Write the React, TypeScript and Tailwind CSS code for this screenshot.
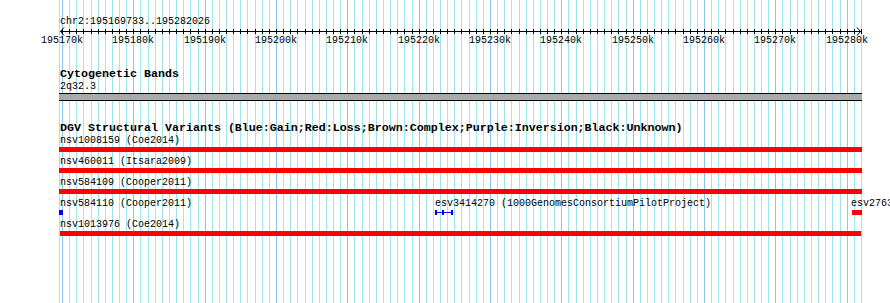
import React from "react";

const colOf = (k: number) => Math.round(62 + (k - 195170) * 7.1336);

const ticks: number[] = Array.from({ length: 113 }, (_, i) => 195170 + i);

type Feature = {
  label: string;
  labelLeft: number;
  left: number;
  width: number;
  kind: "red" | "blue" | "segments";
};

const rows: Feature[][] = [
  [{ label: "nsv1008159 (Coe2014)", labelLeft: 60, left: 59, width: 803, kind: "red" }],
  [{ label: "nsv460011 (Itsara2009)", labelLeft: 60, left: 59, width: 803, kind: "red" }],
  [{ label: "nsv584109 (Cooper2011)", labelLeft: 60, left: 59, width: 803, kind: "red" }],
  [
    { label: "nsv584110 (Cooper2011)", labelLeft: 60, left: 59, width: 4, kind: "blue" },
    {
      label: "esv3414270 (1000GenomesConsortiumPilotProject)",
      labelLeft: 435,
      left: 435,
      width: 18,
      kind: "segments",
    },
    { label: "esv2763", labelLeft: 851, left: 852, width: 10, kind: "red" },
  ],
  [{ label: "nsv1013976 (Coe2014)", labelLeft: 60, left: 60, width: 801, kind: "red" }],
];

function Glyph({ f }: { f: Feature }) {
  if (f.kind === "segments") {
    return (
      <svg
        className="absolute top-[12px]"
        style={{ left: f.left }}
        width={f.width}
        height={5}
        shapeRendering="crispEdges"
      >
        <rect x={0} y={0} width={2} height={5} fill="#0000ff" />
        <rect x={7} y={0} width={2} height={5} fill="#0000ff" />
        <rect x={16} y={0} width={2} height={5} fill="#0000ff" />
        <rect x={0} y={2} width={18} height={1} fill="#0000ff" />
      </svg>
    );
  }
  return (
    <div
      className={
        "absolute top-[12px] h-[5px] " + (f.kind === "red" ? "bg-[#ff0000]" : "bg-[#0000ff]")
      }
      style={{ left: f.left, width: f.width }}
    />
  );
}

export default function App() {
  return (
    <div className="relative w-[890px] h-[303px] overflow-hidden bg-white text-black [font-family:'Liberation_Mono',monospace]">
      <svg
        className="absolute inset-0"
        width={890}
        height={303}
        shapeRendering="crispEdges"
      >
        <rect x={59} y={0} width={1} height={303} fill="#a0e6ee" />
        {ticks.map((k) => (
          <rect
            key={k}
            x={colOf(k)}
            y={0}
            width={1}
            height={303}
            fill={k % 10 === 0 ? "#88c6ec" : "#a0e6ee"}
          />
        ))}
      </svg>

      <div className="relative flex flex-col pt-[16px]">
        <div className="pl-[60px] h-[12px] leading-[12px] text-[10px] whitespace-pre">
          chr2:195169733..195282026
        </div>

        {/* ruler */}
        <div className="relative h-[21px] mt-[-1px]">
          <svg className="absolute left-0 top-0" width={890} height={9}>
            <rect x={60} y={4} width={801} height={1} fill="#000" shapeRendering="crispEdges" />
            {ticks.map((k) => (
              <rect
                key={k}
                x={colOf(k)}
                y={2}
                width={1}
                height={5}
                fill="#000"
                shapeRendering="crispEdges"
              />
            ))}
            <polyline points="64,0.5 60.5,4.5 64,8.5" fill="none" stroke="#000" strokeWidth={1} />
            <polyline points="857,0.5 860.5,4.5 857,8.5" fill="none" stroke="#000" strokeWidth={1} />
          </svg>
          {ticks
            .filter((k) => k % 10 === 0)
            .map((k) => (
              <span
                key={k}
                className="absolute top-[8px] h-[12px] leading-[12px] text-[10px] whitespace-pre"
                style={{ left: colOf(k) - 21 }}
              >
                {k}k
              </span>
            ))}
        </div>

        {/* Cytogenetic Bands */}
        <div className="mt-[20px] pl-[60px] h-[13px] leading-[13px] text-[11.67px] font-bold whitespace-pre">
          Cytogenetic Bands
        </div>
        <div className="pl-[60px] h-[12px] leading-[12px] text-[10px] whitespace-pre">2q32.3</div>
        <div className="ml-[59px] w-[803px] h-[8px] bg-[#aaaaaa] border-y border-black" />

        {/* DGV */}
        <div className="mt-[21px] pl-[60px] h-[13px] leading-[13px] text-[11.67px] font-bold whitespace-pre">
          DGV Structural Variants (Blue:Gain;Red:Loss;Brown:Complex;Purple:Inversion;Black:Unknown)
        </div>
        {rows.map((row, i) => (
          <div key={i} className="relative h-[21px]">
            {row.map((f) => (
              <React.Fragment key={f.label}>
                <span
                  className="absolute top-0 h-[12px] leading-[12px] text-[10px] whitespace-pre"
                  style={{ left: f.labelLeft }}
                >
                  {f.label}
                </span>
                <Glyph f={f} />
              </React.Fragment>
            ))}
          </div>
        ))}
      </div>
    </div>
  );
}
